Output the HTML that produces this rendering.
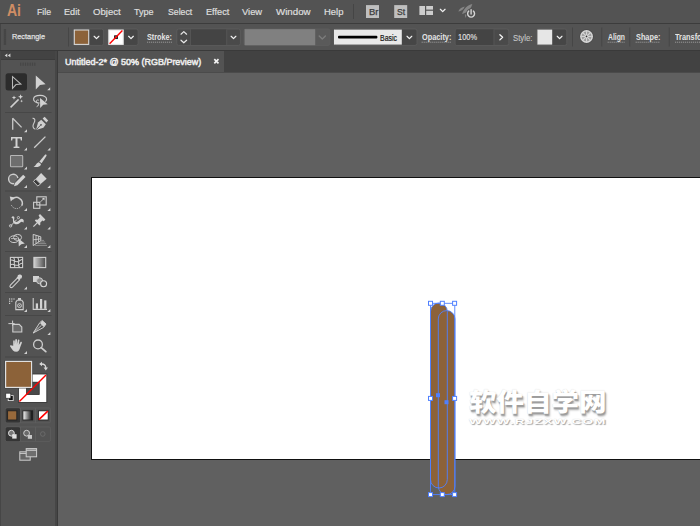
<!DOCTYPE html>
<html><head><meta charset="utf-8"><title>Untitled-2* @ 50% (RGB/Preview)</title>
<style>
html,body{margin:0;padding:0;width:700px;height:526px;overflow:hidden;background:#606060;font-family:"Liberation Sans",sans-serif;}
#app{position:relative;width:700px;height:526px;overflow:hidden;background:#606060;}
.b{position:absolute;}
.t{position:absolute;white-space:nowrap;transform-origin:0 0;line-height:1;}
.wm{position:absolute;white-space:nowrap;transform-origin:0 0;line-height:1;color:#fff;}
svg{position:absolute;left:0;top:0;}
</style></head><body>
<div id="app">
<!-- canvas + artboard -->
<div class="b" style="left:91px;top:177px;width:620px;height:281px;background:#fff;border:1px solid #111;"></div>
<!-- menu bar -->
<div class="b" style="left:0;top:0;width:700px;height:23px;background:#535353;"></div>
<div class="b" style="left:0;top:22.5px;width:700px;height:1.5px;background:#3c3c3c;"></div>
<!-- control bar -->
<div class="b" style="left:0;top:24px;width:700px;height:26px;background:#535353;"></div>
<div class="b" style="left:0;top:24px;width:1px;height:26px;background:#444;"></div>
<div class="b" style="left:0;top:50px;width:700px;height:1px;background:#3a3a3a;"></div>
<!-- tab bar -->
<div class="b" style="left:58px;top:51px;width:642px;height:21.3px;background:#424242;"></div>
<div class="b" style="left:58px;top:51px;width:166.1px;height:21.3px;background:#535353;"></div>
<div class="b" style="left:58px;top:72.3px;width:642px;height:1.2px;background:#4b4b4b;"></div>
<!-- tools panel -->
<div class="b" style="left:0;top:51px;width:58px;height:475px;background:#464646;"></div>
<div class="b" style="left:57.3px;top:51px;width:0.8px;height:475px;background:#3a3a3a;"></div>
<div class="b" style="left:1px;top:59.2px;width:54.4px;height:1px;background:#3c3c3c;"></div>
<div class="b" style="left:1px;top:51px;width:54.4px;height:8.2px;background:#434343;"></div>
<div class="b" style="left:1px;top:60.2px;width:54.4px;height:466px;background:#535353;"></div>
<svg width="700" height="526" viewBox="0 0 700 526" shape-rendering="geometricPrecision">
<defs>
<linearGradient id="gbw" x1="0" x2="1" y1="0" y2="0"><stop offset="0" stop-color="#fff"/><stop offset="1" stop-color="#000"/></linearGradient>
<linearGradient id="ggr" x1="0" x2="1" y1="0" y2="0"><stop offset="0" stop-color="#d0d0d0"/><stop offset="1" stop-color="#4a4a4a"/></linearGradient>
<path id="chev" d="M-2.35,-1.1 L0,1.2 L2.35,-1.1" fill="none" stroke="#f0f0f0" stroke-width="1.25" stroke-linecap="round" stroke-linejoin="round"/>
<path id="tri" d="M0,3 L3,3 L3,0 Z" fill="#cfcfcf"/>
</defs>
<!-- ===== app bar icons ===== -->
<rect x="353" y="4" width="1" height="15" fill="#454545"/>
<rect x="366" y="5.1" width="13" height="12.9" fill="#bfbfbf"/>
<rect x="394.2" y="5.1" width="13" height="12.9" fill="#bfbfbf"/>
<rect x="419.4" y="6" width="5.6" height="9" fill="#cdcdcd"/>
<rect x="426.2" y="6" width="6.8" height="3.6" fill="#cdcdcd"/>
<rect x="426.2" y="10.8" width="6.8" height="4.2" fill="#cdcdcd"/>
<use href="#chev" x="442.7" y="10.4"/>
<!-- rocket -->
<g fill="#868686">
<path d="M472.3,3.9 C467.6,5 463.3,9 462.1,14 C466.4,13 470.9,9.4 472.3,3.9 Z"/>
<path d="M464.8,6.6 C461.6,7.2 459.2,9.2 458.3,11.5 C461.2,11.4 463.6,9.6 464.8,6.6 Z"/>
<path d="M464.9,14.4 L467,14.6 L465.4,18 Z"/>
</g>
<circle cx="471.1" cy="13.7" r="5.1" fill="#535353"/>
<path d="M468.8,11.1 A3.45,3.45 0 1 0 473.4,11.1" fill="none" stroke="#d6d6d6" stroke-width="1.4" stroke-linecap="round"/>
<line x1="471.1" y1="9.8" x2="471.1" y2="14" stroke="#d6d6d6" stroke-width="1.4" stroke-linecap="round"/>

<!-- ===== control bar ===== -->
<g fill="#3d3d3d">
<rect x="3.8" y="29.4" width="2.3" height="1.15"/><rect x="3.8" y="31.4" width="2.3" height="1.15"/><rect x="3.8" y="33.4" width="2.3" height="1.15"/><rect x="3.8" y="35.4" width="2.3" height="1.15"/><rect x="3.8" y="37.4" width="2.3" height="1.15"/><rect x="3.8" y="39.4" width="2.3" height="1.15"/><rect x="3.8" y="41.4" width="2.3" height="1.15"/><rect x="3.8" y="43.4" width="2.3" height="1.15"/>
</g>
<g fill="#464646">
<rect x="68" y="27.5" width="1" height="19"/>
<rect x="572" y="27.5" width="1" height="19"/>
<rect x="601.3" y="27.5" width="1" height="19"/>
<rect x="629.3" y="27.5" width="1" height="19"/>
<rect x="668.7" y="27.5" width="1" height="19"/>
</g>
<!-- fill swatch -->
<rect x="73.3" y="29" width="30.3" height="16.4" rx="2" fill="#464646" stroke="#5e5e5e" stroke-width="0.8"/>
<rect x="74.3" y="30" width="14.4" height="14.4" fill="#8c6239" stroke="#d8d8d8" stroke-width="1.1"/>
<use href="#chev" x="96.5" y="37.4"/>
<!-- stroke swatch -->
<rect x="107.8" y="29" width="30.3" height="16.4" rx="2" fill="#464646" stroke="#5e5e5e" stroke-width="0.8"/>
<rect x="108.8" y="30" width="14.4" height="14.4" fill="#fff" stroke="#e4e4e4" stroke-width="1.1"/>
<rect x="114.6" y="35.8" width="2.8" height="2.8" fill="#777" stroke="#111" stroke-width="0.9"/>
<line x1="109.6" y1="43.8" x2="122.4" y2="30.6" stroke="#f00" stroke-width="1.4"/>
<use href="#chev" x="131" y="37.4"/>
<!-- stroke weight -->
<rect x="176.8" y="29" width="63.6" height="16.4" rx="2" fill="#4a4a4a" stroke="#5e5e5e" stroke-width="0.8"/>
<rect x="190.8" y="29.4" width="35.6" height="15.6" fill="#444"/>
<line x1="190.5" y1="29.4" x2="190.5" y2="45" stroke="#585858" stroke-width="0.8"/>
<line x1="226.7" y1="29.4" x2="226.7" y2="45" stroke="#585858" stroke-width="0.8"/>
<path d="M181,34.2 L183.8,31.6 L186.6,34.2 M181,40.2 L183.8,42.8 L186.6,40.2" fill="none" stroke="#e8e8e8" stroke-width="1.2" stroke-linecap="round" stroke-linejoin="round"/>
<use href="#chev" x="233.5" y="37.4"/>
<!-- variable width profile (disabled) -->
<rect x="244" y="29" width="86" height="16.4" rx="2" fill="#5a5a5a" stroke="#5e5e5e" stroke-width="0.8"/>
<rect x="244.6" y="29.2" width="70.6" height="16" fill="#808080"/>
<path d="M319.2,36 L322.3,39 L325.4,36" fill="none" stroke="#7c7c7c" stroke-width="1.4" stroke-linecap="round" stroke-linejoin="round"/>
<!-- brush definition -->
<rect x="333.4" y="29" width="83.6" height="16.4" rx="2" fill="#464646" stroke="#5e5e5e" stroke-width="0.8"/>
<rect x="334" y="29.6" width="67.8" height="15" fill="#e8e8e8"/>
<rect x="338" y="35.8" width="39.4" height="2.6" rx="1" fill="#000"/>
<use href="#chev" x="409.4" y="37.4"/>
<!-- dotted underlines -->
<g stroke="#a8a8a8" stroke-width="0.8" stroke-dasharray="1.2 0.8">
<line x1="147" y1="42.2" x2="172" y2="42.2"/>
<line x1="421.6" y1="42.2" x2="451" y2="42.2"/>
<line x1="607.6" y1="42.2" x2="624.6" y2="42.2"/>
<line x1="635.6" y1="42.2" x2="660" y2="42.2"/>
<line x1="675" y1="42.2" x2="700" y2="42.2"/>
</g>
<!-- opacity -->
<rect x="455.2" y="29" width="53.6" height="16.4" rx="2" fill="#4a4a4a" stroke="#5e5e5e" stroke-width="0.8"/>
<rect x="455.8" y="29.4" width="37.8" height="15.6" fill="#444"/>
<line x1="494" y1="29.4" x2="494" y2="45" stroke="#585858" stroke-width="0.8"/>
<path d="M499.9,34.7 L502.6,37.3 L499.9,39.9" fill="none" stroke="#f4f4f4" stroke-width="1.3" stroke-linecap="round" stroke-linejoin="round"/>
<!-- style -->
<rect x="536.8" y="29" width="30" height="16.4" rx="2" fill="#464646" stroke="#5e5e5e" stroke-width="0.8"/>
<rect x="537.4" y="29.6" width="14.8" height="15" fill="#e6e6e6"/>
<use href="#chev" x="559.6" y="37.4"/>
<!-- recolor wheel -->
<circle cx="586.55" cy="36.45" r="7.1" fill="#474747"/>
<circle cx="586.55" cy="36.45" r="6.45" fill="#d8d8d8"/>
<circle cx="586.55" cy="36.45" r="5" fill="#9c9c9c"/>
<g stroke="#d4d4d4" stroke-width="1.1">
<line x1="586.55" y1="31.2" x2="586.55" y2="41.7"/>
<line x1="581.3" y1="36.45" x2="591.8" y2="36.45"/>
<line x1="582.85" y1="32.75" x2="590.25" y2="40.15"/>
<line x1="582.85" y1="40.15" x2="590.25" y2="32.75"/>
</g>
<circle cx="586.55" cy="36.45" r="1.7" fill="#dcdcdc"/>
<circle cx="586.55" cy="36.45" r="0.85" fill="#2e2e2e"/>
<!-- tab close -->
<path d="M214.3,59.1 L218.5,63.3 M218.5,59.1 L214.3,63.3" stroke="#f2f2f2" stroke-width="1.7" fill="none"/>
<!-- ===== tools panel ===== -->
<path d="M7.3,53.6 L7.3,57.2 L4.7,55.4 Z M10.4,53.6 L10.4,57.2 L7.8,55.4 Z" fill="#d4d4d4"/>
<g fill="#464646">
<rect x="20.1" y="62.6" width="1.2" height="3.2"/><rect x="22.5" y="62.6" width="1.2" height="3.2"/><rect x="24.9" y="62.6" width="1.2" height="3.2"/><rect x="27.2" y="62.6" width="1.2" height="3.2"/><rect x="29.6" y="62.6" width="1.2" height="3.2"/><rect x="31.9" y="62.6" width="1.2" height="3.2"/><rect x="34.2" y="62.6" width="1.2" height="3.2"/>
</g>
<!-- separators -->
<g fill="#474747">
<rect x="5" y="112" width="46.5" height="1"/>
<rect x="5" y="190.5" width="46.5" height="1"/>
<rect x="5" y="251" width="46.5" height="1"/>
<rect x="5" y="292" width="46.5" height="1"/>
<rect x="5" y="315" width="46.5" height="1"/>
<rect x="5" y="356.5" width="46.5" height="1"/>
</g>
<!-- corner triangles -->
<g>
<use href="#tri" x="47.2" y="87.2"/>
<use href="#tri" x="24" y="129.2"/>
<use href="#tri" x="24" y="147.6"/><use href="#tri" x="47.4" y="147.6"/>
<use href="#tri" x="24" y="166.6"/><use href="#tri" x="47.4" y="166.6"/>
<use href="#tri" x="24" y="185"/><use href="#tri" x="47.4" y="185"/>
<use href="#tri" x="24" y="208"/><use href="#tri" x="47.4" y="208"/>
<use href="#tri" x="24" y="226.5"/><use href="#tri" x="47.4" y="226.5"/>
<use href="#tri" x="24" y="245"/><use href="#tri" x="47.4" y="245"/>
<use href="#tri" x="24" y="286.5"/>
<use href="#tri" x="24" y="309"/><use href="#tri" x="47.4" y="309"/>
<use href="#tri" x="47.4" y="332"/>
<use href="#tri" x="24" y="351"/>
</g>
<!-- row1: selection / direct selection -->
<rect x="5.6" y="73.3" width="21.4" height="17.1" rx="2.5" fill="#2c2c2c"/>
<path d="M12.5,76.6 L20.9,84.1 L16,84.6 L12.5,88.4 Z" fill="none" stroke="#b8b8b8" stroke-width="1.05" stroke-linejoin="miter"/>
<path d="M35.8,75.4 L45.6,84.2 L40,84.9 L35.8,89.6 Z" fill="#d2d2d2"/>
<!-- row2: magic wand / lasso -->
<line x1="10.6" y1="107.4" x2="18.6" y2="99.4" stroke="#d0d0d0" stroke-width="1.5"/>
<path d="M14,95.4 L14.6,97 L16.2,97.6 L14.6,98.2 L14,99.8 L13.4,98.2 L11.8,97.6 L13.4,97 Z" fill="#d6d6d6"/>
<path d="M20.6,94.2 L21.3,96 L23.1,96.7 L21.3,97.4 L20.6,99.2 L19.9,97.4 L18.1,96.7 L19.9,96 Z" fill="#d6d6d6"/>
<path d="M21.6,99.6 L22,100.7 L23.1,101.1 L22,101.5 L21.6,102.6 L21.2,101.5 L20.1,101.1 L21.2,100.7 Z" fill="#d6d6d6"/>
<path d="M39.6,103 C35.5,103 33.2,100.8 33.6,98.6 C34.2,95.8 38,95.3 40.5,95.4 C43.5,95.5 46.8,96.7 46.6,99.2 C46.5,100.2 46,101 45.4,101.6" fill="none" stroke="#cdcdcd" stroke-width="1.15"/>
<path d="M38.8,100.2 C37.2,99.4 35.8,100.6 36.6,101.8 C37.4,103 38.9,103.2 38.5,104.8 C38.3,105.8 37.5,106.4 36.6,106.7" fill="none" stroke="#cdcdcd" stroke-width="1"/>
<path d="M40,98 L47.7,104.2 L43.2,104.8 L40.2,108 Z" fill="#d2d2d2"/>
<!-- row3: anchor / curvature -->
<path d="M12.7,129.8 L12.7,118.2 L21.6,127.4" fill="none" stroke="#c4c4c4" stroke-width="1.35" stroke-linejoin="bevel"/>
<path d="M32.6,118.4 C35.2,118 35.4,120.8 34,123 C32.4,125.6 32.6,128.6 35.4,129.2" fill="none" stroke="#cdcdcd" stroke-width="1.1"/>
<path d="M41.2,119.8 L45.8,124.2 L43.4,127.8 L36,130 L38,122.6 Z" fill="#cfcfcf"/>
<path d="M42.6,118.6 L44.6,116.8 L48.2,120.6 L46.4,122.6 Z" fill="#cfcfcf"/>
<line x1="36.3" y1="129.7" x2="40.6" y2="125.2" stroke="#535353" stroke-width="0.9"/>
<circle cx="41" cy="124.8" r="0.9" fill="#535353"/>
<!-- row4: type / line -->
<path d="M11,137 H22 V140.4 H20.8 L20.4,138.6 H17.5 V146.4 L19.4,146.8 V148 H13.6 V146.8 L15.5,146.4 V138.6 H12.6 L12.2,140.4 H11 Z" fill="#d2d2d2"/>
<line x1="34.2" y1="147.8" x2="45.4" y2="136.6" stroke="#cdcdcd" stroke-width="1.3"/>
<!-- row5: rectangle / paintbrush -->
<rect x="10.5" y="155.5" width="12.2" height="11.2" rx="0.8" fill="#6e6e6e" stroke="#b6b6b6" stroke-width="1.05"/>
<path d="M45.2,154.6 C46.2,154.2 46.9,155 46.4,156 L41.6,163.2 L39.4,161.6 Z" fill="#d2d2d2"/>
<path d="M38.8,162.2 L41,163.9 C41,166 38.5,167.4 33.6,167 C35.6,166 35.8,163.4 38.8,162.2 Z" fill="#d2d2d2"/>
<!-- row6: shaper / eraser -->
<path d="M14.2,183.6 A4.7,4.7 0 1 1 17.9,178" fill="#6a6a6a" stroke="#cdcdcd" stroke-width="1.4"/>
<path d="M23.2,174.8 L25.5,177.1 L17.4,185.2 L14,186.2 L15,182.9 Z" fill="#d2d2d2"/>
<path d="M41.1,173.1 L46.7,178.7 L40.6,184 L35.6,179 Z" fill="#d2d2d2"/>
<path d="M35.6,179 L40.6,184 L37.7,186 L33.5,181.6 Z" fill="#3a3a3a" stroke="#d2d2d2" stroke-width="0.9"/>
<!-- row7: rotate / scale -->
<path d="M12.4,199.2 A5.8,5.8 0 0 1 21.8,205.6" fill="none" stroke="#cdcdcd" stroke-width="1.45"/>
<path d="M21.6,205.4 A5.6,5.6 0 0 1 11.2,204.6" fill="none" stroke="#bdbdbd" stroke-width="1" stroke-dasharray="1.3 1"/>
<path d="M9.8,196.4 L14.6,197.4 L10.8,201.4 Z" fill="#d2d2d2"/>
<rect x="36.8" y="196.8" width="9.4" height="8.2" fill="none" stroke="#cdcdcd" stroke-width="1.1"/>
<rect x="33.6" y="202.3" width="6.2" height="6" fill="none" stroke="#cdcdcd" stroke-width="1.1"/>
<line x1="40.6" y1="201.8" x2="43.6" y2="198.8" stroke="#cdcdcd" stroke-width="1"/>
<path d="M42,198 L44.6,197.8 L44.4,200.4 Z" fill="#d2d2d2"/>
<!-- row8: width / puppet pin -->
<path d="M10.6,226 L16.8,219.6" stroke="#cdcdcd" stroke-width="1"/>
<circle cx="10.6" cy="225.8" r="1.2" fill="none" stroke="#cdcdcd" stroke-width="0.9"/>
<circle cx="18.4" cy="217.6" r="1.1" fill="none" stroke="#cdcdcd" stroke-width="0.9"/>
<path d="M11.4,217.4 C12.8,215 15.2,216.6 14.2,219 C13.6,220.8 15.4,222.6 17.6,221.6 C19.6,220.6 21,217.6 23.2,219.4 C24.2,220.4 23.6,222 23.2,222.8 C22.4,221.4 21.2,221.6 19.8,223 C17.6,225 14.2,224.6 13.2,222.2 C12.6,220.6 13.4,219 12.6,218.2 C12.2,217.8 11.8,217.8 11.4,217.4 Z" fill="#d2d2d2"/>
<path d="M40,214 L45.4,219.6 L43.8,221.2 L42.4,220.4 L40.2,222.8 L40.4,224.6 L39.4,225.4 L34.8,220.6 L35.8,219.6 L37.6,219.8 L39.8,217.4 L38.6,215.6 Z" fill="#d2d2d2"/>
<line x1="37.2" y1="222.8" x2="33.4" y2="226.6" stroke="#d2d2d2" stroke-width="1.2"/>
<!-- row9: shape builder / perspective grid -->
<ellipse cx="14" cy="239.2" rx="4.8" ry="3.4" fill="none" stroke="#cdcdcd" stroke-width="1"/>
<ellipse cx="17.6" cy="237.4" rx="4" ry="3" fill="none" stroke="#cdcdcd" stroke-width="1"/>
<line x1="11" y1="238.6" x2="17.4" y2="238.6" stroke="#cdcdcd" stroke-width="0.8"/>
<path d="M18.4,238.6 L24.8,243.6 L21.2,244.2 L18.8,246.6 Z" fill="#d2d2d2"/>
<path d="M33.2,234.4 L40.8,236.8 L40.8,240.6 L33.2,245.6 Z" fill="none" stroke="#cdcdcd" stroke-width="1"/>
<line x1="36" y1="235.4" x2="36" y2="243.8" stroke="#cdcdcd" stroke-width="0.9"/>
<line x1="38.6" y1="236.2" x2="38.6" y2="242" stroke="#cdcdcd" stroke-width="0.9"/>
<line x1="33.2" y1="239.8" x2="40.8" y2="238.8" stroke="#cdcdcd" stroke-width="0.9"/>
<line x1="41.2" y1="240.4" x2="44" y2="240.4" stroke="#9a9a9a" stroke-width="0.8"/>
<line x1="39.6" y1="242" x2="45.2" y2="242" stroke="#9a9a9a" stroke-width="0.8"/>
<line x1="37.2" y1="243.6" x2="46.2" y2="243.6" stroke="#9a9a9a" stroke-width="0.8"/>
<line x1="35" y1="245.4" x2="47" y2="245.4" stroke="#9a9a9a" stroke-width="0.8"/>
<!-- row10: mesh / gradient -->
<rect x="10.4" y="257.4" width="12.2" height="10.2" fill="#454545" stroke="#cdcdcd" stroke-width="1.1"/>
<path d="M10.4,260.2 C13,258.6 15,262.8 18,261.6 C20,260.8 21,259.2 22.6,259.6 M10.4,264.8 C13,262.6 15.4,266.6 18.4,265 C20.2,264 21.2,263 22.6,263.4 M13.6,257.4 C16,260 12.6,263.6 15,267.6 M17.6,257.4 C20.6,260.4 16.6,264 19.6,267.6" fill="none" stroke="#d0d0d0" stroke-width="1.05"/>
<rect x="33.9" y="257.4" width="11.8" height="10.2" fill="url(#ggr)" stroke="#d0d0d0" stroke-width="1.1"/>
<!-- row11: eyedropper / blend -->
<path d="M10.4,287.4 C9.6,286.6 9.8,285.6 10.6,284.8 L17.6,277.8 L19.6,279.8 L12.8,286.8 C12,287.6 11.2,288 10.4,287.4 Z" fill="none" stroke="#cdcdcd" stroke-width="1.1"/>
<path d="M16.6,277.4 L18,276 L17.6,275.2 L19.4,274.6 C20.6,273.8 22.6,275.4 22,277 L21.2,278.8 L20.6,278.4 L19.2,280 Z" fill="#d2d2d2"/>
<rect x="33" y="276" width="6" height="6" fill="#d2d2d2"/>
<circle cx="39.6" cy="280.8" r="3" fill="#8a8a8a" stroke="#cdcdcd" stroke-width="1"/>
<circle cx="43.6" cy="283.8" r="3" fill="#535353" stroke="#d6d6d6" stroke-width="1.1"/>
<!-- row12: symbol sprayer / graph -->
<g fill="#cdcdcd">
<rect x="9" y="298.4" width="1.2" height="1.2"/><rect x="11.2" y="298.4" width="1.2" height="1.2"/><rect x="13.4" y="298.4" width="1.2" height="1.2"/>
<rect x="9" y="300.6" width="1.2" height="1.2"/><rect x="11.2" y="300.6" width="1.2" height="1.2"/>
<rect x="9" y="302.8" width="1.2" height="1.2"/>
<rect x="18" y="298" width="3" height="2"/>
</g>
<path d="M17.2,300.2 H21.8 L23.2,302.2 V309.6 H15.8 V302.2 Z" fill="#5c5c5c" stroke="#cdcdcd" stroke-width="1.1"/>
<circle cx="19.5" cy="305.6" r="1.9" fill="none" stroke="#cdcdcd" stroke-width="1"/>
<circle cx="19.5" cy="305.6" r="0.6" fill="#cdcdcd"/>
<path d="M33.2,298 V309.4 H47" fill="none" stroke="#cdcdcd" stroke-width="1.1"/>
<g fill="#d2d2d2">
<rect x="35.8" y="303.4" width="2.2" height="5.4"/><rect x="40" y="299" width="2.2" height="9.8"/><rect x="44.2" y="300.4" width="2.2" height="8.4"/>
</g>
<!-- row13: artboard / slice -->
<path d="M12.6,320.6 V326 M8.4,323.6 H14.6" fill="none" stroke="#cdcdcd" stroke-width="1"/>
<path d="M12.8,324.4 H19.2 L21.8,327 V332 H12.8 Z" fill="#6a6a6a" stroke="#cdcdcd" stroke-width="1.1"/>
<path d="M42.2,320.6 L46,324 L43.6,327.4 L33.2,333 L40,322.4 Z" fill="none" stroke="#cdcdcd" stroke-width="1"/>
<path d="M42.2,320.6 L46,324 L43.8,327 L40.2,323.4 Z" fill="#d2d2d2"/>
<line x1="33.4" y1="332.8" x2="41.6" y2="325.2" stroke="#cdcdcd" stroke-width="0.9"/>
<!-- row14: hand / zoom -->
<path d="M13.2,345.8 L13.2,341.2 C13.2,340 14.8,340 14.8,341.2 L14.9,344.6 L15.3,339.8 C15.4,338.6 17,338.7 17,339.9 L16.9,344.4 L17.8,340.3 C18,339.1 19.6,339.4 19.4,340.6 L18.8,345 L20.4,342.2 C21,341.2 22.4,342 21.8,343.1 L20.2,347.2 C19.6,349.6 18.6,351.8 16.2,351.8 C13.4,351.8 12.4,350.2 10.2,346.6 C9.5,345.5 10.8,344.6 11.6,345.6 Z" fill="#d2d2d2"/>
<circle cx="38" cy="344.4" r="4.4" fill="none" stroke="#cdcdcd" stroke-width="1.3"/>
<line x1="41.2" y1="347.6" x2="45.8" y2="351.6" stroke="#cdcdcd" stroke-width="1.8" stroke-linecap="round"/>
<!-- fill / stroke -->
<path d="M18.8,374.3 H46.5 V402 H18.8 Z M26.6,382.2 V394.5 H39.2 V382.2 Z" fill="#fff" fill-rule="evenodd"/>
<rect x="26.6" y="382.2" width="12.6" height="12.3" fill="#4a4a4a" stroke="#383838" stroke-width="0.8"/>
<rect x="18.4" y="373.9" width="28.5" height="28.5" fill="none" stroke="#3a3a3a" stroke-width="0.8"/>
<line x1="19.4" y1="401.4" x2="46" y2="375" stroke="#f00" stroke-width="1.4"/>
<rect x="4.6" y="360.4" width="28" height="28" fill="#3a3a3a"/>
<rect x="5.6" y="361.4" width="26" height="26" fill="#8c6239" stroke="#e0e0e0" stroke-width="1.2"/>
<!-- swap -->
<path d="M41.2,364 C44.4,363.8 45.8,365.6 45.8,368" fill="none" stroke="#d8d8d8" stroke-width="1.3"/>
<path d="M39.2,364 L42,361.8 L42,366.2 Z M45.8,370.6 L43.6,367.6 L48,367.6 Z" fill="#d8d8d8"/>
<!-- default -->
<rect x="8.2" y="395.6" width="5" height="5" fill="#111" stroke="#e8e8e8" stroke-width="0.8"/>
<rect x="5.8" y="393.2" width="5" height="5" fill="#fff" stroke="#222" stroke-width="0.6"/>
<!-- color mode buttons -->
<rect x="5.4" y="408" width="45.2" height="14.8" rx="1.5" fill="#535353" stroke="#5f5f5f" stroke-width="0.8"/>
<rect x="5.6" y="408.2" width="14.6" height="14.4" rx="1.5" fill="#353535"/>
<line x1="20.5" y1="408" x2="20.5" y2="422.8" stroke="#5f5f5f" stroke-width="0.8"/>
<line x1="35.5" y1="408" x2="35.5" y2="422.8" stroke="#5f5f5f" stroke-width="0.8"/>
<rect x="7.6" y="410.8" width="9.2" height="9.2" fill="#98693b" stroke="#222" stroke-width="0.9"/>
<rect x="22.9" y="410.8" width="9.8" height="9.2" fill="url(#gbw)" stroke="#222" stroke-width="0.9"/>
<rect x="38.4" y="410.8" width="9.8" height="9.2" fill="#fff" stroke="#222" stroke-width="0.9"/>
<line x1="38.8" y1="419.6" x2="47.8" y2="411.2" stroke="#f00" stroke-width="1.6"/>
<!-- draw mode buttons -->
<rect x="5.4" y="427" width="45.2" height="14.4" rx="1.5" fill="#535353" stroke="#5f5f5f" stroke-width="0.8"/>
<rect x="5.6" y="427.2" width="14.6" height="14" rx="1.5" fill="#353535"/>
<line x1="20.5" y1="427" x2="20.5" y2="441.4" stroke="#5f5f5f" stroke-width="0.8"/>
<line x1="35.5" y1="427" x2="35.5" y2="441.4" stroke="#5f5f5f" stroke-width="0.8"/>
<circle cx="11.4" cy="433.2" r="2.9" fill="#777" stroke="#e0e0e0" stroke-width="1"/>
<rect x="12.2" y="434.2" width="4.4" height="4.4" fill="#e0e0e0"/>
<circle cx="26.6" cy="433.2" r="2.9" fill="#6a6a6a" stroke="#d0d0d0" stroke-width="1"/>
<rect x="27.8" y="435" width="4.2" height="3.8" fill="#c8c8c8"/>
<circle cx="42.8" cy="434" r="2.3" fill="none" stroke="#6c6c6c" stroke-width="0.9"/>
<!-- screen mode -->
<rect x="19.8" y="451.8" width="10.4" height="8.4" fill="#666" stroke="#cdcdcd" stroke-width="1"/>
<line x1="19.8" y1="453.4" x2="30.2" y2="453.4" stroke="#cdcdcd" stroke-width="1"/>
<rect x="26.2" y="448.6" width="10.4" height="8.2" fill="#6e6e6e" stroke="#cdcdcd" stroke-width="1"/>
<line x1="26.2" y1="450.2" x2="36.6" y2="450.2" stroke="#cdcdcd" stroke-width="1.2"/>
<!-- ===== artwork ===== -->
<rect x="430.5" y="303" width="16.8" height="185" rx="8.4" fill="#8c6239"/>
<rect x="438.3" y="310.6" width="16.7" height="184" rx="8.35" fill="#8c6239"/>
<g fill="none" stroke="#4f80ff" stroke-width="0.9">
<rect x="430.5" y="303" width="16.8" height="185" rx="8.4"/>
<rect x="438.3" y="310.6" width="16.7" height="184" rx="8.35"/>
<rect x="430.5" y="303.3" width="24.3" height="191.3"/>
</g>
<g fill="#4f80ff">
<rect x="436" y="393.2" width="4" height="4"/>
<rect x="444.5" y="400.2" width="4" height="4"/>
</g>
<g fill="#fff" stroke="#4f80ff" stroke-width="1">
<rect x="428.5" y="301.3" width="4" height="4"/><rect x="440.3" y="301.3" width="4" height="4"/><rect x="452.6" y="301.3" width="4" height="4"/>
<rect x="428.5" y="396.4" width="4" height="4"/><rect x="452.6" y="396.4" width="4" height="4"/>
<rect x="428.5" y="492.6" width="4" height="4"/><rect x="440.3" y="492.6" width="4" height="4"/><rect x="452.6" y="492.6" width="4" height="4"/>
</g>
</svg>

<span class="wm" style="left:469px;top:389.5px;font-family:'Liberation Sans', 'Noto Sans CJK SC', sans-serif;font-size:25px;font-weight:900;transform:scaleX(1.0999);text-shadow:1px 1.5px 1px #9c9c9c, 1.5px 2.5px 2px #c4c4c4, 0 0 1px #d4d4d4;">软件自学网</span>
<span class="wm" style="left:469px;top:417.6px;font-family:'Liberation Sans', sans-serif;font-size:8px;font-weight:bold;transform:scaleX(1.7041);text-shadow:1px 1.5px 1px #9c9c9c, 1.5px 2.5px 2px #c4c4c4, 0 0 1px #d4d4d4;letter-spacing:0.6px;text-shadow:0.6px 1px 0.8px #a4a4a4, 0 0 1px #d0d0d0;">WWW.RJZXW.COM</span>

<span class="t" style="left:6.8px;top:2.85px;font-size:16.6px;color:#cf8d64;font-weight:bold;transform:scale(0.8437,1);">Ai</span>
<span class="t" style="left:37px;top:7.30px;font-size:9.8px;color:#e0e0e0;font-weight:normal;transform:scale(0.8926,1);-webkit-text-stroke:0.15px #e0e0e0;">File</span>
<span class="t" style="left:64.3px;top:7.30px;font-size:9.8px;color:#e0e0e0;font-weight:normal;transform:scale(0.9295,1);-webkit-text-stroke:0.15px #e0e0e0;">Edit</span>
<span class="t" style="left:93.3px;top:7.30px;font-size:9.8px;color:#e0e0e0;font-weight:normal;transform:scale(0.9778,1);-webkit-text-stroke:0.15px #e0e0e0;">Object</span>
<span class="t" style="left:133.7px;top:7.30px;font-size:9.8px;color:#e0e0e0;font-weight:normal;transform:scale(0.9224,1);-webkit-text-stroke:0.15px #e0e0e0;">Type</span>
<span class="t" style="left:167.5px;top:7.30px;font-size:9.8px;color:#e0e0e0;font-weight:normal;transform:scale(0.8886,1);-webkit-text-stroke:0.15px #e0e0e0;">Select</span>
<span class="t" style="left:205.7px;top:7.30px;font-size:9.8px;color:#e0e0e0;font-weight:normal;transform:scale(0.9367,1);-webkit-text-stroke:0.15px #e0e0e0;">Effect</span>
<span class="t" style="left:241.9px;top:7.30px;font-size:9.8px;color:#e0e0e0;font-weight:normal;transform:scale(0.9543,1);-webkit-text-stroke:0.15px #e0e0e0;">View</span>
<span class="t" style="left:275.6px;top:7.30px;font-size:9.8px;color:#e0e0e0;font-weight:normal;transform:scale(0.9926,1);-webkit-text-stroke:0.15px #e0e0e0;">Window</span>
<span class="t" style="left:323.6px;top:7.30px;font-size:9.8px;color:#e0e0e0;font-weight:normal;transform:scale(0.9625,1);-webkit-text-stroke:0.15px #e0e0e0;">Help</span>
<span class="t" style="left:12px;top:33.24px;font-size:8.1px;color:#e0e0e0;font-weight:normal;transform:scale(0.9053,1);-webkit-text-stroke:0.25px #e0e0e0;">Rectangle</span>
<span class="t" style="left:147px;top:33.66px;font-size:8.2px;color:#e4e4e4;font-weight:bold;transform:scale(0.8859,1);">Stroke:</span>
<span class="t" style="left:380px;top:33.80px;font-size:8.5px;color:#1a1a1a;font-weight:normal;transform:scale(0.8174,1);-webkit-text-stroke:0.2px #1a1a1a;">Basic</span>
<span class="t" style="left:421.6px;top:33.66px;font-size:8.2px;color:#e4e4e4;font-weight:bold;transform:scale(0.8973,1);">Opacity:</span>
<span class="t" style="left:458px;top:33.10px;font-size:8.5px;color:#e2e2e2;font-weight:normal;transform:scale(0.8736,1);-webkit-text-stroke:0.12px #e2e2e2;">100%</span>
<span class="t" style="left:513px;top:33.80px;font-size:8.5px;color:#c4c4c4;font-weight:normal;transform:scale(0.9123,1);-webkit-text-stroke:0.12px #c4c4c4;">Style:</span>
<span class="t" style="left:607.6px;top:33.66px;font-size:8.2px;color:#e4e4e4;font-weight:bold;transform:scale(0.8305,1);">Align</span>
<span class="t" style="left:635.6px;top:33.66px;font-size:8.2px;color:#e4e4e4;font-weight:bold;transform:scale(0.8934,1);">Shape:</span>
<span class="t" style="left:675px;top:33.66px;font-size:8.2px;color:#e4e4e4;font-weight:bold;transform:scale(0.8989,1);">Transform</span>
<span class="t" style="left:65.3px;top:57.42px;font-size:9.9px;color:#ececec;font-weight:normal;transform:scale(0.9089,1);-webkit-text-stroke:0.55px #ececec;">Untitled-2* @ 50% (RGB/Preview)</span>
<span class="t" style="left:368.8px;top:7.95px;font-size:8.8px;color:#3c3c3c;font-weight:normal;transform:scale(1.0686,1);-webkit-text-stroke:0.25px #3c3c3c;">Br</span>
<span class="t" style="left:396.7px;top:7.95px;font-size:8.8px;color:#3c3c3c;font-weight:normal;transform:scale(0.9744,1);-webkit-text-stroke:0.25px #3c3c3c;">St</span>
</div>
</body></html>
